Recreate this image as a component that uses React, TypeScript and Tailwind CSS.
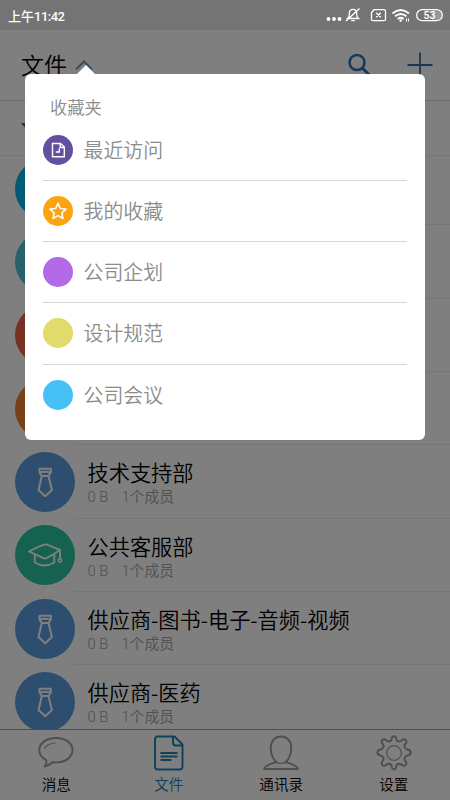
import React from "react";

interface Favorite {
  name: string;
  color: string;
  icon?: React.ReactNode;
}

interface Department {
  name?: string;
  color: string;
  icon?: React.ReactNode;
}

const TieIcon = () => (
  <svg viewBox="0 0 60 60" className="h-full w-full" fill="none" stroke="currentColor" strokeWidth="2" strokeLinejoin="round">
    <path d="M24.500 16.800h11.300v3.700l-2.300 3.500h-6.700l-2.300-3.500zM26.800 24l-3.300 14 6.700 6.300 6.700-6.300L33.500 24M24.500 20.500q5.500-1.600 11.300 0" />
  </svg>
);

const CapIcon = () => (
  <svg viewBox="0 0 60 60" className="h-full w-full" fill="none" stroke="currentColor" strokeWidth="1.900" strokeLinejoin="round" strokeLinecap="round">
    <path d="M14 26.500q8-4.500 15-6.800 1.500-.5 3 0l13 5.300q-7 5-13.500 8.200-1.500.7-3 0-6.500-3-14.500-6.700zM19.800 30.500v7q9.500 6 19.500 0v-7.500M45 25.500v8" />
    <circle cx="45" cy="35.500" r="1.700" strokeWidth="1.500" />
  </svg>
);

const RecentIcon = () => (
  <svg viewBox="0 0 30 30" className="h-full w-full" fill="none" stroke="white" strokeWidth="1.400">
    <path d="M9.500 8.500h8l3.800 3.600v9.700H9.500zM17.200 8.500v4h4M16.300 13.500v3.500h-3.500" />
  </svg>
);

const StarIcon = () => (
  <svg viewBox="0 0 30 30" className="h-full w-full" fill="none" stroke="white" strokeWidth="1.500" strokeLinejoin="round">
    <path d="M15 7.300l2.300 5.200 5.700.6-4.200 3.900 1.200 5.500-5-2.800-5 2.800 1.200-5.500L7 13.100l5.700-.6z" />
  </svg>
);

const favorites: Favorite[] = [
  { name: "最近访问", color: "bg-[#6350a0]", icon: <RecentIcon /> },
  { name: "我的收藏", color: "bg-[#fca311]", icon: <StarIcon /> },
  { name: "公司企划", color: "bg-[#b36ae6]" },
  { name: "设计规范", color: "bg-[#e1db6b]" },
  { name: "公司会议", color: "bg-[#46c1f5]" },
];

const departments: Department[] = [
  { color: "bg-[#00b4e6]" },
  { color: "bg-[#4cc4d0]" },
  { color: "bg-[#f0604c]" },
  { color: "bg-[#f08030]" },
  { name: "技术支持部", color: "bg-[#5c9ce0]", icon: <TieIcon /> },
  { name: "公共客服部", color: "bg-[#2cc4a0]", icon: <CapIcon /> },
  { name: "供应商-图书-电子-音频-视频", color: "bg-[#5c9ce0]", icon: <TieIcon /> },
  { name: "供应商-医药", color: "bg-[#5c9ce0]", icon: <TieIcon /> },
];

const tabs = [
  {
    label: "消息",
    active: false,
    icon: (
      <>
        <path d="M18 3c9.500 0 16.500 5 16.500 12S27.500 27.500 18 27.500c-1.200 0-2.500-.1-3.700-.3-2 2.500-4.500 3.800-7.800 4.300 1.800-1.800 2.300-4 1.700-6.500C3.500 22.800 1.300 19 1.300 15 1.300 8 8.500 3 18 3z" />
        <path d="M6.500 14c1-3.300 5-5.600 11-6" strokeWidth="1.200" />
      </>
    ),
  },
  {
    label: "文件",
    active: true,
    icon: (
      <path d="M6.500 1.500h17l8 8V31.500q0 3-3 3H7q-3 0-3-3V4.500q0-3 2.500-3zM22 1.500v6q0 3 3 3h6.500M9.500 18h17M9.500 21.500h17M9.500 25h11" />
    ),
  },
  {
    label: "通讯录",
    active: false,
    icon: (
      <>
        <path d="M18 1.500c6 0 10.300 4.500 10.300 11.500 0 6-2.300 11-5.800 14.200 5 1.300 11.500 3 12.500 6.800H1c1-3.800 7.500-5.500 12.500-6.800C10 24 7.700 19 7.700 13 7.700 6 12 1.500 18 1.500z" />
        <path d="M13.500 27.200q4.500 2.300 9 0" strokeWidth="1.200" />
      </>
    ),
  },
  {
    label: "设置",
    active: false,
    icon: (
      <>
        <path d="M15.600 4.200C15.800 2.300 16.500 1.300 18 1.300s2.200 1 2.400 2.900c.2 1.400 1.200 2.200 2.600 2.300 1.100 0 1.900-.4 2.700-1.200 1.500-1.200 2.800-1.400 3.900-.4s.9 2.600-.2 4c-.9 1.100-1.200 2-.8 3.100.4 1.200 1.400 2.300 2.800 2.500 2 .3 3.300 1.400 3.300 3s-1.300 2.700-3.300 3c-1.400.2-2.400 1.200-2.800 2.400-.4 1.200-.1 2.200.8 3.300 1.100 1.300 1.300 2.800.2 3.900s-2.500.9-3.900-.3c-.8-.7-1.600-1.100-2.700-1.100-1.400.1-2.400.9-2.600 2.300-.2 2-.9 3.500-2.400 3.500s-2.200-1.500-2.400-3.500c-.2-1.400-1.200-2.200-2.600-2.300-1.100 0-1.900.4-2.700 1.100-1.400 1.200-2.800 1.400-3.900.3s-.9-2.600.2-3.900c.9-1.100 1.200-2.100.8-3.300-.4-1.200-1.400-2.200-2.800-2.400-2-.3-3.300-1.400-3.300-3s1.300-2.700 3.300-3c1.400-.2 2.400-1.300 2.800-2.500.4-1.100.1-2-.8-3.100-1.100-1.400-1.300-3-.2-4s2.400-.8 3.900.4c.8.800 1.600 1.200 2.700 1.200 1.400-.1 2.400-.9 2.600-2.300z" />
        <circle cx="18" cy="18" r="7.300" strokeWidth="1.200" />
      </>
    ),
  },
];

const StatusBar = () => (
  <div className="relative z-20 flex h-[30px] shrink-0 items-center justify-between bg-[#747474] pr-[6px] pl-2 text-white">
    <span className="pt-[2px] text-[13px] leading-none font-medium">
      上午<span className="tracking-[-0.500px]">11:42</span>
    </span>
    <svg width="118" height="20" viewBox="0 0 118 20" fill="none" stroke="white" strokeWidth="1.300">
      <g fill="white" stroke="none">
        <circle cx="2.500" cy="14" r="1.900" />
        <circle cx="8" cy="14" r="1.900" />
        <circle cx="13.500" cy="14" r="1.900" />
      </g>
      <path d="M20.500 13.500h13M22 13.200c1.300-1 1.300-2.500 1.300-4.500 0-3 1.500-4.300 3.700-4.300s3.700 1.300 3.700 4.300c0 2 0 3.500 1.300 4.500M25.300 15.700h3.500M20 16L33.500 3.500" />
      <path d="M48 4.700h10q1.500 0 1.500 1.500v8q0 1.500-1.500 1.500H47q-1.500 0-1.500-1.500V7.500zM50.300 7.800l4.500 4.500M54.800 7.800l-4.500 4.500" />
      <g strokeWidth="1.900">
        <path d="M66.500 8.400q8.200-6.800 16.500 0M69 11.300q5.700-4.700 11.500 0M71.700 14q3-2.400 6 0" />
      </g>
      <circle cx="74.700" cy="15.500" r="1.300" fill="white" stroke="none" />
      <path d="M80.500 13.500v3M82.500 13.500v3" strokeWidth="1" />
      <rect x="90.700" y="4.700" width="25.600" height="11" rx="5.500" />
      <path d="M106 5.300h4.500a4.900 4.900 0 0 1 0 9.800H106z" fill="white" fillOpacity=".25" stroke="none" />
      <text x="103.500" y="14" textAnchor="middle" fill="white" stroke="none" fontSize="10.500" fontWeight="600" fontFamily="Roboto">53</text>
    </svg>
  </div>
);

const Header = () => (
  <div className="flex h-[71px] shrink-0 items-center border-b border-[#d0d0d0] pr-[17px] pl-[21px]">
    <h1 className="pt-[3px] text-[23px] leading-none font-[350] text-black">文件</h1>
    <svg className="ml-[8px]" width="20" height="12" viewBox="0 0 20 12" fill="none" stroke="#6f9fc5" strokeWidth="2">
      <path d="M1 10.500l8-8 8 8" />
    </svg>
    <svg className="ml-auto" width="24" height="24" viewBox="0 0 24 24" fill="none" stroke="#2f71ad">
      <circle cx="10" cy="9.500" r="7.500" strokeWidth="2.500" />
      <path d="M15.300 15l7.500 7.500" strokeWidth="3" />
    </svg>
    <svg className="ml-9" width="26" height="26" viewBox="0 0 26 26" stroke="#356f9f" strokeWidth="1.800">
      <path d="M.5 13h25M13 .5v25" />
    </svg>
  </div>
);

const DepartmentRow: React.FC<Department> = ({ name, color, icon }) => (
  <div className="flex h-[73.330px] shrink-0 items-center pl-[15px]">
    <div className={`h-[60px] w-[60px] shrink-0 rounded-full text-white ${color}`}>
      {icon}
    </div>
    <div className="flex h-full flex-1 flex-col justify-center border-b border-[#ededed] pt-[3px] pl-[12.500px]">
      {name && (
        <>
          <div className="font-['Noto_Sans_CJK_SC',sans-serif] text-[21.200px] leading-[27px] font-[350] text-black">
            {name}
          </div>
          <div className="mt-[2px] flex gap-[13px] text-[14.800px] leading-[20px] font-[350] text-[#a0a0a0]">
            <span>0 B</span>
            <span>1个成员</span>
          </div>
        </>
      )}
    </div>
  </div>
);

const FavoritesMenu = () => (
  <div className="absolute top-[74px] left-[25px] z-20 h-[366px] w-[400px] rounded-[6px] bg-white px-[18px] text-[#8c8c8c]">
    <div className="absolute -top-[9px] left-[51px] h-0 w-0 border-x-[10px] border-b-[10px] border-x-transparent border-b-white" />
    <div className="h-[45.500px] pt-[21px] pl-[7px] text-[17.300px] leading-[26px] font-[350]">收藏夹</div>
    {favorites.map((item) => (
      <div
        key={item.name}
        className="flex h-[61.250px] items-center border-b-[1.500px] border-[#d6d6d6] last:border-transparent"
      >
        <div className={`h-[30px] w-[30px] rounded-full ${item.color}`}>{item.icon}</div>
        <span className="pt-[4px] pl-[10.500px] text-[19.900px] leading-none font-[350]">{item.name}</span>
      </div>
    ))}
  </div>
);

export default function App() {
  return (
    <div className="relative flex h-[800px] w-[450px] flex-col overflow-hidden bg-white font-['Roboto','Noto_Sans_CJK_SC',sans-serif]">
      <StatusBar />
      <Header />
      <div className="flex min-h-0 flex-1 flex-col overflow-hidden">
        <div className="h-[55px] shrink-0 border-b border-[#ededed] pt-[22px] pl-[21px]">
          <svg width="12" height="8" viewBox="0 0 12 8" fill="#606060">
            <path d="M0 0h12L6 7z" />
          </svg>
        </div>
        <div className="-mt-1 flex flex-col">
          {departments.map((item, index) => (
            <DepartmentRow key={index} {...item} />
          ))}
        </div>
      </div>
      <nav className="grid h-[71px] shrink-0 grid-cols-4 border-t border-[#78a4c4] bg-white">
        {tabs.map((tab) => (
          <div
            key={tab.label}
            className={`flex flex-col items-center pt-[5px] ${tab.active ? "text-[#1c82b4]" : "text-black"}`}
          >
            <svg
              width="36"
              height="36"
              viewBox="0 0 36 36"
              fill="none"
              stroke={tab.active ? "#1c82b4" : "#9c9c9c"}
              strokeWidth="1.900"
              strokeLinejoin="round"
            >
              {tab.icon}
            </svg>
            <span className="mt-[5px] text-[14.600px] leading-[18px] font-[350]">{tab.label}</span>
          </div>
        ))}
      </nav>

      {/* Dimmed backdrop behind the menu */}
      <div className="absolute inset-0 z-10 bg-black/50" />
      <FavoritesMenu />
    </div>
  );
}
